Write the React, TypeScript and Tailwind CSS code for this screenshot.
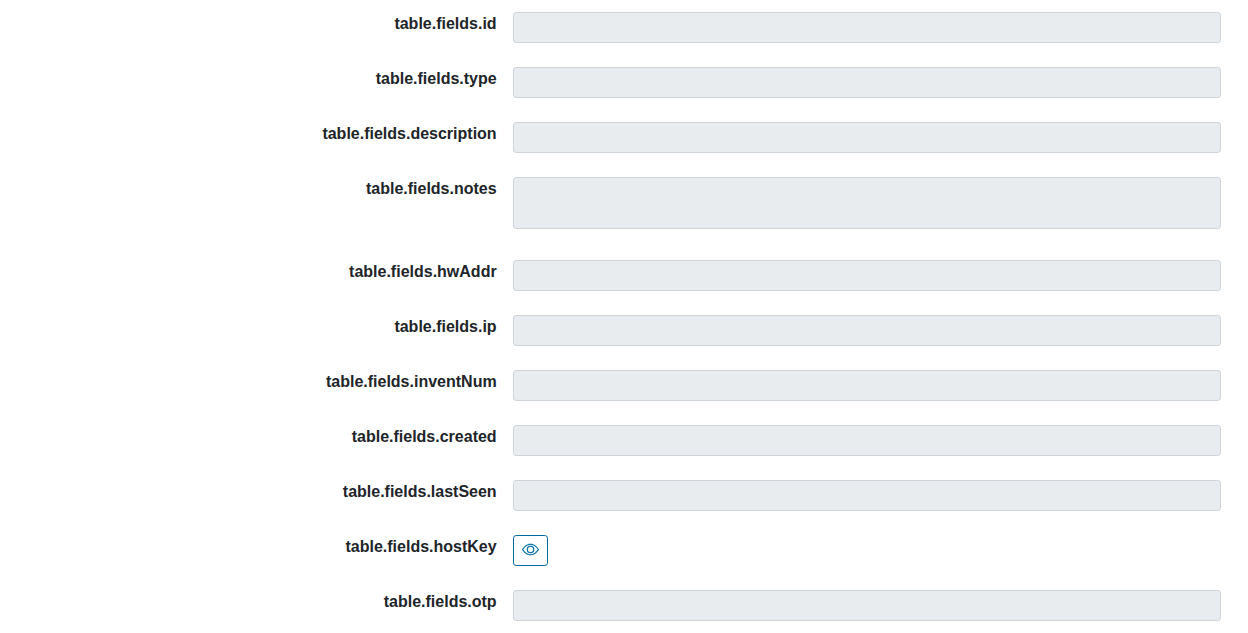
import { BsEye } from "react-icons/bs";

type Field = { name: string; kind?: "textarea" | "reveal" };

const fields: Field[] = [
  { name: "id" },
  { name: "type" },
  { name: "description" },
  { name: "notes", kind: "textarea" },
  { name: "hwAddr" },
  { name: "ip" },
  { name: "inventNum" },
  { name: "created" },
  { name: "lastSeen" },
  { name: "hostKey", kind: "reveal" },
  { name: "otp" },
];

const control =
  "block w-full resize-none overflow-hidden rounded-[3.2px] border border-[#ced4da] bg-[#e9ecef] px-2 py-1 text-sm";

function Control({ field }: { field: Field }) {
  if (field.kind === "textarea") {
    return <textarea disabled className={`${control} h-[52px]`} />;
  }
  if (field.kind === "reveal") {
    return (
      <button className="flex h-[31px] w-[35px] items-start justify-center rounded-[3.2px] border border-[#006a9e] pt-[5px] text-[#006fa6]">
        <BsEye size={17} strokeWidth={0.15} />
      </button>
    );
  }
  return <input disabled className={`${control} h-[31px]`} />;
}

export default function App() {
  return (
    <div className="h-[633px] overflow-hidden bg-white pt-3 font-['Liberation_Sans',sans-serif] text-base text-[#212529]">
      {fields.map((field) => (
        <div
          key={field.name}
          className={field.kind === "textarea" ? "flex h-[83px]" : "flex h-[55px]"}
        >
          <div className="w-[496.65px] shrink-0 text-right font-bold">
            {`table.fields.${field.name}`}
          </div>
          <div className="ml-[16.35px] w-[708px]">
            <Control field={field} />
          </div>
        </div>
      ))}
    </div>
  );
}
